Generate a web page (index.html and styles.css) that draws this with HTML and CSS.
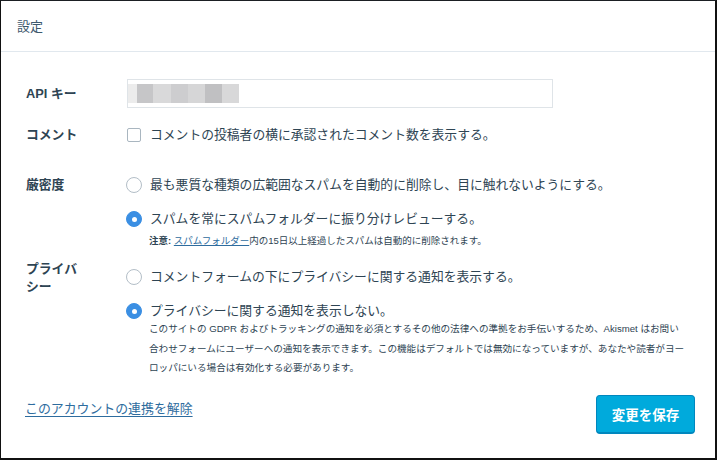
FILE: index.html
```html
<!DOCTYPE html>
<html lang="ja">
<head>
<meta charset="utf-8">
<title>設定</title>
<link rel="stylesheet" href="styles.css">
</head>
<body>
<div class="frame">
  <div class="header">設定</div>
  <div class="content">
    <div class="row row-api">
      <div class="label">API キー</div>
      <div class="input">
        <span class="blur b1"></span><span class="blur b2"></span><span class="blur b3"></span><span class="blur b4"></span><span class="blur b5"></span><span class="blur b6"></span><span class="blur b7"></span>
      </div>
    </div>
    <div class="row row-comment">
      <div class="label">コメント</div>
      <div class="options">
        <div class="option"><span class="checkbox"></span><span>コメントの投稿者の横に承認されたコメント数を表示する。</span></div>
      </div>
    </div>
    <div class="row row-strict">
      <div class="label">厳密度</div>
      <div class="options">
        <div class="option"><span class="radio"></span><span>最も悪質な種類の広範囲なスパムを自動的に削除し、目に触れないようにする。</span></div>
        <div class="option option-next"><span class="radio checked"></span><span>スパムを常にスパムフォルダーに振り分けレビューする。</span></div>
        <p class="note"><strong>注意:</strong> <a href="#" class="inline-link">スパムフォルダー</a>内の15日以上経過したスパムは自動的に削除されます。</p>
      </div>
    </div>
    <div class="row row-privacy">
      <div class="label label-two">プライバシー</div>
      <div class="options">
        <div class="option"><span class="radio"></span><span>コメントフォームの下にプライバシーに関する通知を表示する。</span></div>
        <div class="option option-next"><span class="radio checked"></span><span>プライバシーに関する通知を表示しない。</span></div>
        <p class="desc">このサイトの GDPR およびトラッキングの通知を必須とするその他の法律への準拠をお手伝いするため、Akismet はお問い<br>合わせフォームにユーザーへの通知を表示できます。この機能はデフォルトでは無効になっていますが、あなたや読者がヨー<br>ロッパにいる場合は有効化する必要があります。</p>
      </div>
    </div>
  </div>
  <div class="footer">
    <a href="#" class="disconnect">このアカウントの連携を解除</a>
    <button class="save" type="button">変更を保存</button>
  </div>
</div>
</body>
</html>
```
FILE: styles.css
```css
html, body {
  margin: 0;
  padding: 0;
  background: #ffffff;
}
.frame {
  width: 717px;
  height: 460px;
  box-sizing: border-box;
  border-left: 1px solid #111;
  border-top: 1px solid #1b1f23;
  border-right: 2px solid #111;
  border-bottom: 2px solid #111;
  background: #fff;
  font-family: "Liberation Sans", "Noto Sans CJK JP", sans-serif;
  color: #2e4453;
  overflow: hidden;
}
.header {
  height: 51px;
  box-sizing: border-box;
  border-bottom: 1px solid #e1e8ee;
  padding-left: 16px;
  display: flex;
  align-items: center;
  font-size: 13px;
  color: #3d596d;
  padding-bottom: 1px;
}
.content {
  padding-left: 25px;
}
.row {
  display: flex;
  align-items: flex-start;
}
.label {
  width: 100px;
  flex: none;
  font-weight: 700;
  font-size: 12.8px;
  line-height: 18px;
  color: #2e4453;
}
.label-two {
  width: 58px;
  margin-right: 42px;
  margin-top: -8px;
}
.row-api {
  margin-top: 27px;
  align-items: center;
}
.row-api .label {
  padding-top: 1px;
}
.input {
  width: 426px;
  height: 29px;
  box-sizing: border-box;
  border: 1px solid #dfe4e8;
  display: flex;
  align-items: flex-start;
  padding-top: 4px;
  margin-left: 1px;
}
.blur {
  display: block;
  height: 19px;
}
.b1 { width: 9px; background: #ececec; }
.b2 { width: 16px; background: #c6c6c8; }
.b3 { width: 18px; background: #d9d9da; }
.b4 { width: 17px; background: #cdcdcf; }
.b5 { width: 17px; background: #d6d6d7; }
.b6 { width: 17px; background: #c0c0c2; }
.b7 { width: 17px; background: #d8d8d9; }
.row-comment {
  margin-top: 18px;
}
.row-strict {
  margin-top: 32px;
}
.row-privacy {
  margin-top: 18px;
}
.options {
  display: flex;
  flex-direction: column;
}
.option {
  display: flex;
  align-items: center;
  font-size: 12.8px;
  line-height: 18px;
  color: #2e4453;
}
.option-next {
  margin-top: 16px;
}
.checkbox {
  width: 14px;
  height: 14px;
  box-sizing: border-box;
  border: 1px solid #a9b6c0;
  border-radius: 2px;
  margin-left: 1px;
  margin-right: 9px;
  flex: none;
}
.radio {
  width: 16px;
  height: 16px;
  box-sizing: border-box;
  border: 1px solid #b3bec7;
  border-radius: 50%;
  margin-right: 8px;
  flex: none;
  display: flex;
  align-items: center;
  justify-content: center;
  background: #fff;
}
.radio.checked {
  background: #3b8fe3;
  border-color: #3b8fe3;
}
.radio.checked::after {
  content: "";
  width: 5px;
  height: 5px;
  border-radius: 50%;
  background: #fff;
}
.note {
  margin: 4px 0 0 23px;
  font-size: 9.5px;
  line-height: 18px;
  color: #2e4453;
}
.note strong {
  font-weight: 700;
}
.inline-link {
  color: #2e6c9e;
  text-decoration: underline;
}
.desc {
  margin: -1px 0 0 23px;
  font-size: 9.6px;
  line-height: 19.5px;
  color: #2e4453;
  white-space: nowrap;
}
.footer {
  display: flex;
  justify-content: space-between;
  align-items: flex-start;
  padding: 17px 20px 0 24px;
}
.disconnect {
  margin-top: 5px;
  font-size: 12.9px;
  line-height: 18px;
  color: #2e6c9e;
  text-decoration: underline;
  text-underline-offset: 3px;
}
.save {
  width: 99px;
  height: 39px;
  box-sizing: border-box;
  background: #00aadc;
  border: 1px solid #0087be;
  border-bottom-width: 2px;
  border-radius: 4px;
  color: #fff;
  font-family: "Liberation Sans", "Noto Sans CJK JP", sans-serif;
  font-weight: 700;
  font-size: 13.5px;
  padding: 0;
  cursor: pointer;
}
```
